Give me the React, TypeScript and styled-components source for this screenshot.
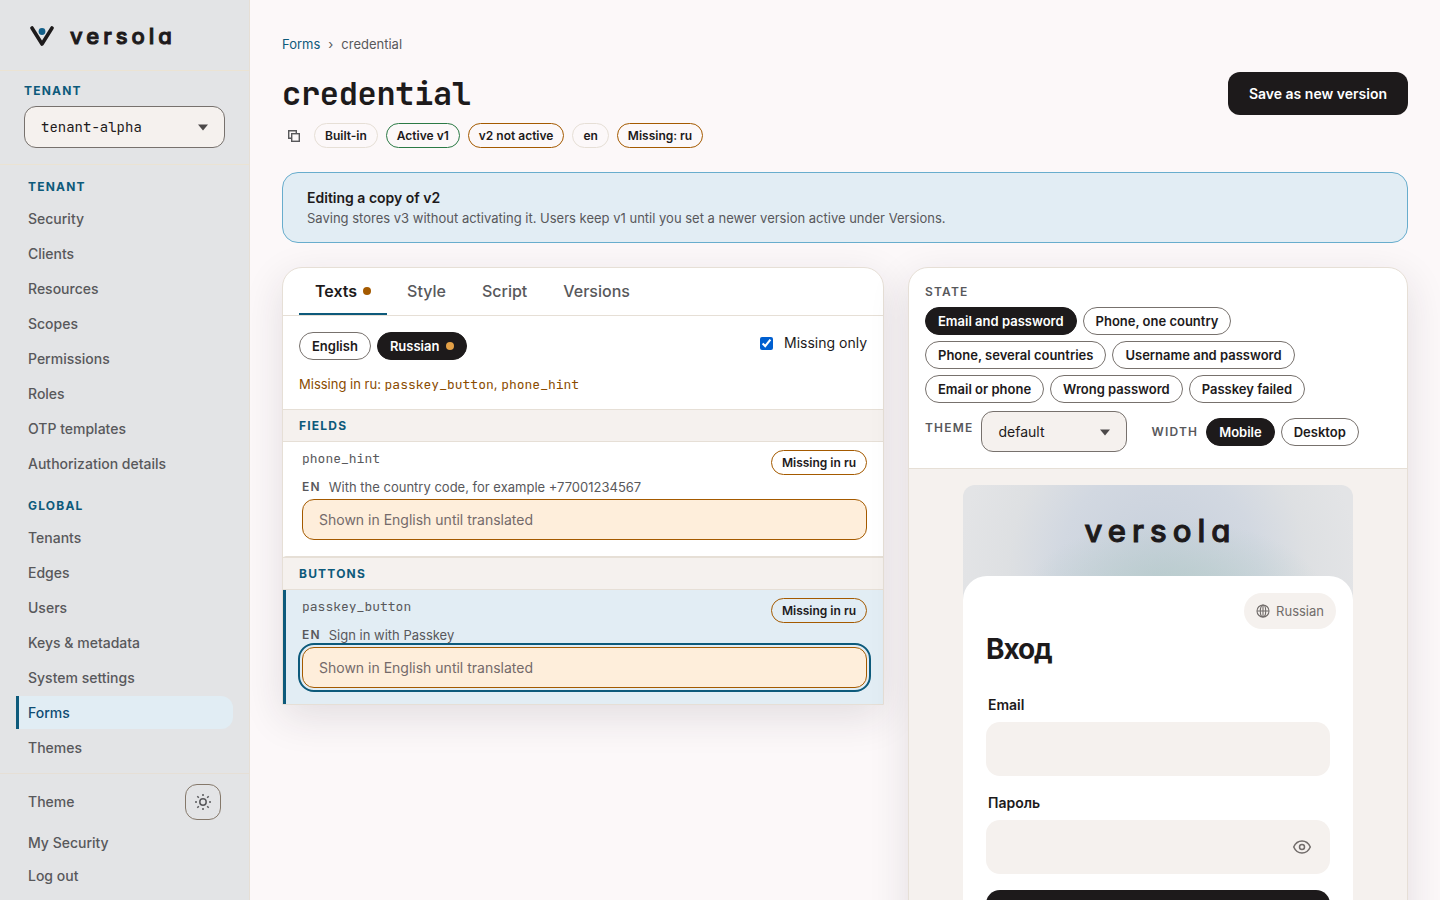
import React from "react";
import styled, { createGlobalStyle, css } from "styled-components";

const color = {
  page: "#fcf8f9",
  sidebar: "#e3e4e6",
  sunken: "#f5f1ee",
  card: "#ffffff",
  ink: "#1d1a1b",
  muted: "#58585b",
  line: "#e6dfd6",
  control: "#77716d",
  accent: "#0d5a7b",
  info: "#e2edf4",
  infoLine: "#68adcd",
  warn: "#a45a00",
  warnText: "#8a4b00",
  warnBg: "#feeedb",
  ok: "#2b7a45",
};

const sans = `Inter, "Noto Sans", sans-serif`;
const mono = `"JetBrains Mono", "DejaVu Sans Mono", "Liberation Mono", monospace`;

const GlobalStyle = createGlobalStyle`
  *, *::before, *::after { box-sizing: border-box; }
  body {
    margin: 0;
    background: ${color.page};
    color: ${color.ink};
    font-family: ${sans};
    font-size: 14px;
    line-height: 20px;
  }
  button, input, select { font: inherit; color: inherit; margin: 0; }
  button { cursor: pointer; }
`;

const Shell = styled.div`
  display: grid;
  grid-template-columns: 250px minmax(0, 1fr);
  height: 100vh;
`;

/* Sidebar */

const Sidebar = styled.aside`
  display: flex;
  flex-direction: column;
  min-height: 0;
  overflow: hidden;
  background: ${color.sidebar};
  border-right: 1px solid ${color.line};
`;

const Brand = styled.a`
  display: flex;
  align-items: center;
  gap: 16px;
  height: 71px;
  padding: 2px 30px 0;
  border-bottom: 1px solid #ebe3d3;
  color: ${color.ink};
  text-decoration: none;
`;

const Wordmark = styled.span<{ $large?: boolean }>`
  padding-left: ${(p) => (p.$large ? 5 : 0)}px;
  font-family: ${sans};
  font-size: ${(p) => (p.$large ? 31 : 22)}px;
  font-weight: 500;
  line-height: 32px;
  letter-spacing: ${(p) => (p.$large ? 6 : 4)}px;
  font-feature-settings: "cv11";
  -webkit-text-stroke: 1px currentColor;
`;

const TenantBox = styled.div`
  display: flex;
  flex-direction: column;
  gap: 6px;
  padding: 10px 24px 16px;
  border-bottom: 1px solid #ebe3d3;
`;

const Overline = styled.span`
  font-size: 12px;
  font-weight: 700;
  line-height: 19px;
  letter-spacing: 0.1em;
  text-transform: uppercase;
  color: ${color.accent};
`;

const SelectFrame = styled.span`
  position: relative;
  display: block;

  svg {
    position: absolute;
    top: 50%;
    right: 16px;
    margin-top: -3px;
    pointer-events: none;
  }
`;

const Select = styled.select<{ $mono?: boolean; $width?: string; $tall?: boolean }>`
  appearance: none;
  display: block;
  width: ${(p) => p.$width ?? "100%"};
  height: ${(p) => (p.$tall ? 42 : 41)}px;
  padding: 0 36px 0 16px;
  border: 1px solid ${color.control};
  border-radius: 12px;
  background: ${color.sunken};
  font-family: ${(p) => (p.$mono ? mono : sans)};
  font-size: 14px;
`;

const Nav = styled.nav`
  display: flex;
  flex-direction: column;
  padding: 8px 16px;
`;

const NavGroup = styled.section`
  & + & {
    margin-top: 12px;
  }
`;

const NavHeading = styled.h2`
  margin: 0;
  padding: 4px 12px 6px;
  font-size: 12px;
  font-weight: 700;
  line-height: 19px;
  letter-spacing: 0.1em;
  text-transform: uppercase;
  color: ${color.accent};
`;

const NavList = styled.ul`
  display: flex;
  flex-direction: column;
  gap: 2px;
  margin: 0;
  padding: 0;
  list-style: none;
`;

const NavLink = styled.a<{ $active?: boolean }>`
  display: block;
  padding: 8px 9px;
  border-left: 3px solid ${(p) => (p.$active ? color.accent : "transparent")};
  border-radius: 0 12px 12px 0;
  background: ${(p) => (p.$active ? "#e1edf4" : "transparent")};
  background-clip: border-box;
  color: ${(p) => (p.$active ? "#0f4c73" : color.muted)};
  font-size: 14px;
  font-weight: 500;
  line-height: 17px;
  text-decoration: none;
`;

const SidebarFooter = styled.footer`
  margin-top: auto;
  padding: 10px 16px 8px;
  border-top: 1px solid ${color.line};
`;

const ThemeRow = styled.div`
  display: flex;
  align-items: center;
  justify-content: space-between;
  margin-bottom: 6px;
  padding: 0 12px;
  color: ${color.muted};
  font-weight: 500;
`;

const ThemeButton = styled.button`
  display: grid;
  place-items: center;
  width: 36px;
  height: 36px;
  padding: 0;
  border: 1px solid #85786a;
  border-radius: 12px;
  background: transparent;
  color: ${color.muted};
`;

/* Main column */

const Main = styled.main`
  min-width: 0;
  padding: 32px;
  overflow-y: auto;
  scrollbar-width: none;
`;

const Breadcrumbs = styled.nav`
  display: flex;
  gap: 8px;
  margin-bottom: 16px;
  font-size: 13px;
  line-height: 24px;
  color: ${color.muted};

  a {
    color: ${color.accent};
    text-decoration: none;
  }
`;

const TitleRow = styled.header`
  display: flex;
  align-items: center;
  justify-content: space-between;
  margin-bottom: 8px;
`;

const Title = styled.h1`
  margin: 0;
  font-family: ${mono};
  font-size: 32px;
  font-weight: 700;
  line-height: 43px;
  letter-spacing: -0.01em;
`;

const SaveButton = styled.button`
  height: 43px;
  padding: 0 21px;
  border: 0;
  border-radius: 12px;
  background: ${color.ink};
  color: #fff;
  font-size: 14px;
  font-weight: 600;
`;

const Tags = styled.div`
  display: flex;
  align-items: center;
  gap: 8px;
  margin-bottom: 24px;
`;

const CopyButton = styled.button`
  display: grid;
  place-items: center;
  width: 24px;
  height: 24px;
  padding: 0;
  border: 0;
  background: none;
  color: ${color.muted};
`;

const tones = { plain: color.line, ok: color.ok, warn: color.warn };

const Tag = styled.span<{ $tone?: keyof typeof tones }>`
  padding: 0 10px;
  border: 1px solid ${(p) => tones[p.$tone ?? "plain"]};
  border-radius: 999px;
  font-size: 12px;
  font-weight: 600;
  line-height: 23px;
  white-space: nowrap;
`;

const Notice = styled.section`
  margin-bottom: 24px;
  padding: 15px 24px 14px;
  border: 1px solid ${color.infoLine};
  border-radius: 16px;
  background: ${color.info};

  h2 {
    margin: 0;
    font-size: 14px;
    font-weight: 600;
    line-height: 20px;
  }

  p {
    margin: 0;
    font-size: 13px;
    line-height: 20px;
    color: ${color.muted};
  }
`;

const Columns = styled.div`
  display: grid;
  grid-template-columns: minmax(0, 1fr) 500px;
  align-items: start;
  gap: 24px;
`;

const Panel = styled.section<{ $squareBottom?: boolean }>`
  border: 1px solid ${color.line};
  border-radius: ${(p) => (p.$squareBottom ? "20px 20px 0 0" : "20px")};
  background: ${color.card};
  box-shadow: 0 12px 40px rgba(40, 30, 50, 0.12);
`;

const Tabs = styled.div`
  display: flex;
  gap: 4px;
  height: 48px;
  padding: 0 16px;
  border-bottom: 1px solid ${color.line};
`;

const Tab = styled.button<{ $active?: boolean }>`
  display: flex;
  align-items: center;
  gap: 6px;
  padding: 0 16px;
  border: 0;
  border-bottom: 2px solid ${(p) => (p.$active ? color.accent : "transparent")};
  background: none;
  color: ${(p) => (p.$active ? color.ink : color.muted)};
  font-size: 16px;
  font-weight: ${(p) => (p.$active ? 600 : 500)};
`;

const Dot = styled.span<{ $light?: boolean }>`
  width: 8px;
  height: 8px;
  border-radius: 50%;
  background: ${(p) => (p.$light ? "#e3a046" : color.warn)};
`;

const Filters = styled.div`
  display: flex;
  align-items: flex-start;
  justify-content: space-between;
  padding: 16px 16px 12px;
`;

const PillGroup = styled.div`
  display: flex;
  flex-wrap: wrap;
  gap: 6px;
`;

const Pill = styled.button<{ $active?: boolean }>`
  display: flex;
  align-items: center;
  gap: 7px;
  height: 28px;
  padding: 0 12px;
  border: 1px solid ${color.control};
  border-radius: 14px;
  background: transparent;
  font-size: 13px;
  font-weight: 600;
  white-space: nowrap;
  ${(p) =>
    p.$active &&
    css`
      border-color: ${color.ink};
      background: ${color.ink};
      color: #fff;
    `}
`;

const CheckLabel = styled.label`
  display: flex;
  align-items: center;
  gap: 11px;
  line-height: 22px;

  input {
    width: 13px;
    height: 13px;
    accent-color: #005fd0;
  }
`;

const MissingLine = styled.p`
  margin: 0;
  padding: 0 16px 12px;
  font-size: 13px;
  line-height: 24px;
  color: ${color.warnText};

  code {
    font-family: ${mono};
  }
`;

const SectionHeading = styled.h3`
  margin: 0;
  padding: 0 16px;
  border: solid ${color.line};
  border-width: 1px 0;
  background: ${color.sunken};
  color: ${color.accent};
  font-size: 12px;
  font-weight: 700;
  line-height: 31px;
  letter-spacing: 0.1em;
  text-transform: uppercase;
`;

const TextRow = styled.div<{ $active?: boolean }>`
  display: flex;
  flex-direction: column;
  padding: 8px 16px 16px;
  border-left: 3px solid ${(p) => (p.$active ? color.accent : "transparent")};
  background: ${(p) => (p.$active ? color.info : "transparent")};

  &:not(:last-child) {
    border-bottom: 1px solid ${color.line};
  }
`;

const TextRowHead = styled.div`
  display: flex;
  align-items: flex-start;
  justify-content: space-between;
`;

const Key = styled.label`
  font-family: ${mono};
  font-size: 13px;
  line-height: 17px;
  color: ${color.muted};
`;

const Source = styled.p`
  display: flex;
  gap: 8px;
  margin: 0;
  font-size: 13px;
  line-height: 24px;
  color: ${color.muted};

  b {
    font-size: 12px;
    font-weight: 600;
    line-height: 23px;
    letter-spacing: 0.1em;
  }
`;

const TranslationInput = styled.input<{ $ring?: boolean }>`
  width: 100%;
  height: 41px;
  padding: 0 16px;
  border: 1px solid ${color.warn};
  border-radius: 12px;
  background: ${color.warnBg};
  font-size: 14px;
  outline: ${(p) => (p.$ring ? `2px solid ${color.accent}` : "none")};
  outline-offset: 2px;

  &::placeholder {
    color: #746a6a;
    opacity: 1;
  }
`;

/* Preview column */

const PreviewControls = styled.div`
  display: flex;
  flex-direction: column;
  padding: 16px 16px 16px;
  border-bottom: 1px solid ${color.line};
`;

const Caption = styled.span`
  color: ${color.muted};
  font-size: 12px;
  font-weight: 600;
  line-height: 16px;
  letter-spacing: 0.1em;
  text-transform: uppercase;
`;

const StateGroup = styled.div`
  display: flex;
  flex-direction: column;
  gap: 7px;
  margin-bottom: 8px;
`;

const OptionRow = styled.div`
  display: flex;
  align-items: center;
  gap: 24px;
`;

const Field = styled.label`
  display: flex;
  align-items: center;
  gap: 8px;

  ${Caption} {
    padding-bottom: 8px;
  }
`;

const WidthGroup = styled.div`
  display: flex;
  align-items: center;
  gap: 8px;
`;

const Stage = styled.div`
  display: flex;
  justify-content: center;
  padding: 16px;
  border-radius: 0 0 20px 20px;
  background: ${color.sunken};
`;

const Device = styled.div`
  width: 390px;
  overflow: hidden;
  border-radius: 12px;
  background:
    radial-gradient(ellipse 150px 75px at 54% 110px, rgba(180, 203, 200, 0.85), rgba(190, 205, 208, 0)),
    radial-gradient(ellipse 200px 220px at 50% 90px, #c6cfdb 0%, #d2d8e1 50%, rgba(218, 221, 224, 0.6) 75%, rgba(227, 228, 230, 0) 100%),
    linear-gradient(#e3e4e6, #e3e4e6);
`;

const DeviceHeader = styled.div`
  display: grid;
  place-items: center;
  height: 91px;
`;

const LoginCard = styled.form`
  display: flex;
  flex-direction: column;
  padding: 17px 23px 24px;
  border-radius: 24px 24px 0 0;
  background: ${color.card};
`;

const LanguageButton = styled.button`
  display: flex;
  align-items: center;
  align-self: flex-end;
  gap: 6px;
  height: 36px;
  margin-right: -6px;
  padding: 0 12px;
  border: 0;
  border-radius: 18px;
  background: ${color.sunken};
  color: #716c6a;
  font-size: 13px;
`;

const LoginTitle = styled.h2`
  margin: 0 0 24px;
  font-size: 28px;
  font-weight: 700;
  line-height: 41px;
  letter-spacing: -0.04em;
`;

const LoginField = styled.div`
  display: flex;
  flex-direction: column;
  gap: 6px;
  margin-bottom: 16px;

  label {
    padding: 0 2px;
    font-weight: 600;
    line-height: 22px;
  }
`;

const LoginInputFrame = styled.div`
  display: flex;
  align-items: center;
  height: 54px;
  padding: 0 16px;
  border-radius: 14px;
  background: ${color.sunken};

  input {
    flex: 1;
    min-width: 0;
    height: 100%;
    border: 0;
    outline: 0;
    background: transparent;
  }
`;

const EyeButton = styled.button`
  display: grid;
  place-items: center;
  width: 24px;
  height: 24px;
  padding: 0;
  border: 0;
  background: none;
  color: #716c6a;
`;

const SubmitButton = styled.button`
  height: 52px;
  border: 0;
  border-radius: 14px;
  background: ${color.ink};
  color: #fff;
  font-weight: 600;
`;

const Caret = () => (
  <svg width="12" height="7" viewBox="0 0 12 7" aria-hidden="true">
    <path d="M1 .500h10L6 6.500z" fill="#4c4949" />
  </svg>
);

const BrandMark = () => (
  <svg width="24" height="20" viewBox="0 0 24 20" aria-hidden="true">
    <path d="M2 2l10 16L22 2" fill="none" stroke={color.ink} strokeWidth="3.600" strokeLinecap="round" strokeLinejoin="round" />
    <circle cx="12" cy="5.500" r="3.400" fill="#13608a" />
  </svg>
);

const SunIcon = () => (
  <svg width="18" height="18" viewBox="0 0 18 18" fill="none" stroke="currentColor" strokeWidth="1.500" aria-hidden="true">
    <circle cx="9" cy="9" r="3.200" />
    <path d="M9 1v2M9 15v2M1 9h2M15 9h2M3.300 3.300l1.500 1.500M13.200 13.200l1.500 1.500M3.300 14.700l1.500-1.500M13.200 4.800l1.500-1.500" />
  </svg>
);

const CopyIcon = () => (
  <svg width="12" height="12" viewBox="0 0 12 12" fill="none" stroke="currentColor" strokeWidth="1.400" aria-hidden="true">
    <path d="M3.500 8.300H.7V.7h7.600v2.800" />
    <rect x="3.700" y="3.700" width="7.600" height="7.600" />
  </svg>
);

const GlobeIcon = () => (
  <svg width="14" height="14" viewBox="0 0 14 14" fill="none" stroke="currentColor" strokeWidth="1.100" aria-hidden="true">
    <circle cx="7" cy="7" r="6" />
    <ellipse cx="7" cy="7" rx="2.700" ry="6" />
    <path d="M1 7h12M7 1v12" />
  </svg>
);

const EyeIcon = () => (
  <svg width="20" height="16" viewBox="0 0 20 16" fill="none" stroke="currentColor" strokeWidth="1.500" aria-hidden="true">
    <path d="M1.700 8C3.500 4 6.500 2 10 2s6.500 2 8.300 6C16.500 12 13.500 14 10 14S3.500 12 1.700 8z" />
    <circle cx="10" cy="8" r="2.500" />
  </svg>
);

const navigation = [
  {
    title: "Tenant",
    items: ["Security", "Clients", "Resources", "Scopes", "Permissions", "Roles", "OTP templates", "Authorization details"],
  },
  {
    title: "Global",
    items: ["Tenants", "Edges", "Users", "Keys & metadata", "System settings", "Forms", "Themes"],
  },
];

const states = [
  "Email and password",
  "Phone, one country",
  "Phone, several countries",
  "Username and password",
  "Email or phone",
  "Wrong password",
  "Passkey failed",
];

const sections = [
  { title: "Fields", key: "phone_hint", source: "With the country code, for example +77001234567", active: false },
  { title: "Buttons", key: "passkey_button", source: "Sign in with Passkey", active: true },
];

export default function App() {
  return (
    <>
      <GlobalStyle />
      <Shell>
        <Sidebar>
          <Brand href="#home">
            <BrandMark />
            <Wordmark>versola</Wordmark>
          </Brand>
          <TenantBox>
            <Overline as="label" htmlFor="tenant">Tenant</Overline>
            <SelectFrame>
              <Select id="tenant" $mono $tall>
                <option>tenant-alpha</option>
              </Select>
              <Caret />
            </SelectFrame>
          </TenantBox>
          <Nav aria-label="Main">
            {navigation.map((group) => (
              <NavGroup key={group.title}>
                <NavHeading>{group.title}</NavHeading>
                <NavList>
                  {group.items.map((item) => (
                    <li key={item}>
                      <NavLink href={`#${item}`} $active={item === "Forms"}>
                        {item}
                      </NavLink>
                    </li>
                  ))}
                </NavList>
              </NavGroup>
            ))}
          </Nav>
          <SidebarFooter>
            <ThemeRow>
              <span>Theme</span>
              <ThemeButton type="button" aria-label="Switch theme">
                <SunIcon />
              </ThemeButton>
            </ThemeRow>
            <NavLink href="#my-security">My Security</NavLink>
            <NavLink href="#logout">Log out</NavLink>
          </SidebarFooter>
        </Sidebar>

        <Main>
          <Breadcrumbs aria-label="Breadcrumb">
            <a href="#forms">Forms</a>
            <span>›</span>
            <span>credential</span>
          </Breadcrumbs>
          <TitleRow>
            <Title>credential</Title>
            <SaveButton type="button">Save as new version</SaveButton>
          </TitleRow>
          <Tags>
            <CopyButton type="button" aria-label="Copy identifier">
              <CopyIcon />
            </CopyButton>
            <Tag>Built-in</Tag>
            <Tag $tone="ok">Active v1</Tag>
            <Tag $tone="warn">v2 not active</Tag>
            <Tag>en</Tag>
            <Tag $tone="warn">Missing: ru</Tag>
          </Tags>
          <Notice>
            <h2>Editing a copy of v2</h2>
            <p>Saving stores v3 without activating it. Users keep v1 until you set a newer version active under Versions.</p>
          </Notice>

          <Columns>
            <Panel $squareBottom>
              <Tabs role="tablist">
                <Tab type="button" role="tab" aria-selected $active>
                  Texts <Dot />
                </Tab>
                <Tab type="button" role="tab">Style</Tab>
                <Tab type="button" role="tab">Script</Tab>
                <Tab type="button" role="tab">Versions</Tab>
              </Tabs>
              <Filters>
                <PillGroup>
                  <Pill type="button">English</Pill>
                  <Pill type="button" $active>
                    Russian <Dot $light />
                  </Pill>
                </PillGroup>
                <CheckLabel>
                  <input type="checkbox" defaultChecked />
                  Missing only
                </CheckLabel>
              </Filters>
              <MissingLine>
                Missing in ru: <code>passkey_button</code>, <code>phone_hint</code>
              </MissingLine>
              {sections.map((section) => (
                <React.Fragment key={section.key}>
                  <SectionHeading>{section.title}</SectionHeading>
                  <TextRow $active={section.active}>
                    <TextRowHead>
                      <Key htmlFor={section.key}>{section.key}</Key>
                      <Tag $tone="warn">Missing in ru</Tag>
                    </TextRowHead>
                    <Source>
                      <b>EN</b>
                      <span>{section.source}</span>
                    </Source>
                    <TranslationInput
                      id={section.key}
                      type="text"
                      placeholder="Shown in English until translated"
                      $ring={section.active}
                    />
                  </TextRow>
                </React.Fragment>
              ))}
            </Panel>

            <Panel>
              <PreviewControls>
                <StateGroup>
                  <Caption>State</Caption>
                  <PillGroup>
                    {states.map((state, index) => (
                      <Pill key={state} type="button" $active={index === 0}>
                        {state}
                      </Pill>
                    ))}
                  </PillGroup>
                </StateGroup>
                <OptionRow>
                  <Field>
                    <Caption>Theme</Caption>
                    <SelectFrame>
                      <Select $width="146px">
                        <option>default</option>
                      </Select>
                      <Caret />
                    </SelectFrame>
                  </Field>
                  <WidthGroup>
                    <Caption>Width</Caption>
                    <PillGroup>
                      <Pill type="button" $active>Mobile</Pill>
                      <Pill type="button">Desktop</Pill>
                    </PillGroup>
                  </WidthGroup>
                </OptionRow>
              </PreviewControls>
              <Stage>
                <Device>
                  <DeviceHeader>
                    <Wordmark $large>versola</Wordmark>
                  </DeviceHeader>
                  <LoginCard>
                    <LanguageButton type="button">
                      <GlobeIcon />
                      Russian
                    </LanguageButton>
                    <LoginTitle>Вход</LoginTitle>
                    <LoginField>
                      <label htmlFor="login-email">Email</label>
                      <LoginInputFrame>
                        <input id="login-email" type="email" />
                      </LoginInputFrame>
                    </LoginField>
                    <LoginField>
                      <label htmlFor="login-password">Пароль</label>
                      <LoginInputFrame>
                        <input id="login-password" type="password" />
                        <EyeButton type="button" aria-label="Show password">
                          <EyeIcon />
                        </EyeButton>
                      </LoginInputFrame>
                    </LoginField>
                    <SubmitButton type="button" aria-label="Sign in" />
                  </LoginCard>
                </Device>
              </Stage>
            </Panel>
          </Columns>
        </Main>
      </Shell>
    </>
  );
}
